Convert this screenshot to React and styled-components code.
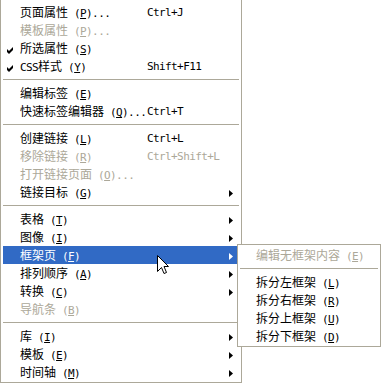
import React from 'react';
import styled, { createGlobalStyle } from 'styled-components';

const Global = createGlobalStyle`
  html, body { margin: 0; padding: 0; background: #fff; }
  body { width: 382px; height: 384px; overflow: hidden; }
`;

const Stage = styled.div`
  position: relative;
  width: 382px;
  height: 384px;
  background: #fff;
  font-family: "Noto Sans CJK SC", sans-serif;
  font-size: 12px;
  color: #000;
`;

const Menu = styled.div`
  width: 242px;
  box-sizing: border-box;
  border: 1px solid #aca899;
  border-top: none;
  padding: 3px 2px 1px;
  background: #fff;
`;

const SubMenu = styled.div`
  position: absolute;
  left: 237px;
  top: 244px;
  width: 144px;
  box-sizing: border-box;
  border: 1px solid #aca899;
  padding: 1px 2px;
  background: #fff;
`;

const Row = styled.div`
  height: 18px;
  display: grid;
  grid-template-columns: ${(p) => (p.$sub ? '16px 1fr' : '17px 127px 1fr 12px')};
  align-items: center;
  line-height: 18px;
  white-space: nowrap;
  background: ${(p) => (p.$active ? '#316ac5' : 'transparent')};
  color: ${(p) => (p.$active ? '#fff' : p.$disabled ? '#aca899' : '#000')};
`;

const Separator = styled.div`
  height: 1px;
  margin: 4px 0;
  background: #aca899;
`;

const CheckCell = styled.div`
  display: flex;
  align-items: center;
  padding-left: 4px;
  padding-top: 2px;
  height: 18px;
  box-sizing: border-box;
`;

const Label = styled.span`
  display: block;
`;

const Latin = styled.span`
  font-family: "DejaVu Sans Mono", "Liberation Mono", monospace;
  font-size: 11px;
  letter-spacing: -0.6px;
`;

const Mnemonic = styled.span`
  text-decoration: underline;
`;

const Shortcut = styled.span`
  font-family: "DejaVu Sans Mono", "Liberation Mono", monospace;
  font-size: 11px;
  letter-spacing: -0.6px;
`;

const ArrowCell = styled.div`
  display: flex;
  align-items: center;
  padding-left: 2px;
  height: 18px;
`;

const Cursor = styled.svg`
  position: absolute;
  left: 157px;
  top: 255px;
`;

const splitText = (s) =>
  s
    .split(/([\x00-\x7F]+)/)
    .filter(Boolean)
    .map((part, i) => (/[\x00-\x7F]/.test(part) ? <Latin key={i}>{part}</Latin> : part));

const Check = () => (
  <svg width="7" height="7" viewBox="0 0 7 7">
    <polygon points="0,2 2,4 6,0 6,3 2,7 0,5" fill="#000" />
  </svg>
);

const Arrow = ({ color }) => (
  <svg width="4" height="7" viewBox="0 0 4 7">
    <polygon points="0,0 4,3.5 0,7" fill={color} />
  </svg>
);

const ItemText = ({ label, mn, suffix = '' }) => (
  <Label>
    {splitText(label)}
    <Latin>
      {' ('}
      <Mnemonic>{mn}</Mnemonic>
      {')' + suffix}
    </Latin>
  </Label>
);

const mainItems = [
  { label: '页面属性', mn: 'P', suffix: '...', sc: 'Ctrl+J' },
  { label: '模板属性', mn: 'P', suffix: '...', disabled: true },
  { label: '所选属性', mn: 'S', checked: true },
  { label: 'CSS样式', mn: 'Y', checked: true, sc: 'Shift+F11' },
  'sep',
  { label: '编辑标签', mn: 'E' },
  { label: '快速标签编辑器', mn: 'Q', suffix: '...', sc: 'Ctrl+T' },
  'sep',
  { label: '创建链接', mn: 'L', sc: 'Ctrl+L' },
  { label: '移除链接', mn: 'R', sc: 'Ctrl+Shift+L', disabled: true },
  { label: '打开链接页面', mn: 'O', suffix: '...', disabled: true },
  { label: '链接目标', mn: 'G', sub: true },
  'sep',
  { label: '表格', mn: 'T', sub: true },
  { label: '图像', mn: 'I', sub: true },
  { label: '框架页', mn: 'F', sub: true, active: true },
  { label: '排列顺序', mn: 'A', sub: true },
  { label: '转换', mn: 'C', sub: true },
  { label: '导航条', mn: 'B', disabled: true },
  'sep',
  { label: '库', mn: 'I', sub: true },
  { label: '模板', mn: 'E', sub: true },
  { label: '时间轴', mn: 'M', sub: true },
];

const subItems = [
  { label: '编辑无框架内容', mn: 'E', disabled: true },
  'sep',
  { label: '拆分左框架', mn: 'L' },
  { label: '拆分右框架', mn: 'R' },
  { label: '拆分上框架', mn: 'U' },
  { label: '拆分下框架', mn: 'D' },
];

export default function App() {
  return (
    <Stage>
      <Global />
      <Menu>
        {mainItems.map((it, i) =>
          it === 'sep' ? (
            <Separator key={i} />
          ) : (
            <Row key={i} $active={it.active} $disabled={it.disabled}>
              <CheckCell>{it.checked && <Check />}</CheckCell>
              <ItemText label={it.label} mn={it.mn} suffix={it.suffix} />
              <Shortcut>{it.sc || ''}</Shortcut>
              <ArrowCell>{it.sub && <Arrow color={it.active ? '#fff' : '#000'} />}</ArrowCell>
            </Row>
          )
        )}
      </Menu>
      <SubMenu>
        {subItems.map((it, i) =>
          it === 'sep' ? (
            <Separator key={i} />
          ) : (
            <Row key={i} $sub $disabled={it.disabled}>
              <span />
              <ItemText label={it.label} mn={it.mn} />
            </Row>
          )
        )}
      </SubMenu>
      <Cursor width="12" height="20" viewBox="0 0 12 20">
        <polygon
          points="0.5,0.5 0.5,16.5 4.5,12.5 7,18.5 9.5,17.5 7,11.5 11.5,11.5"
          fill="#fff"
          stroke="#000"
          strokeWidth="1"
        />
      </Cursor>
    </Stage>
  );
}
